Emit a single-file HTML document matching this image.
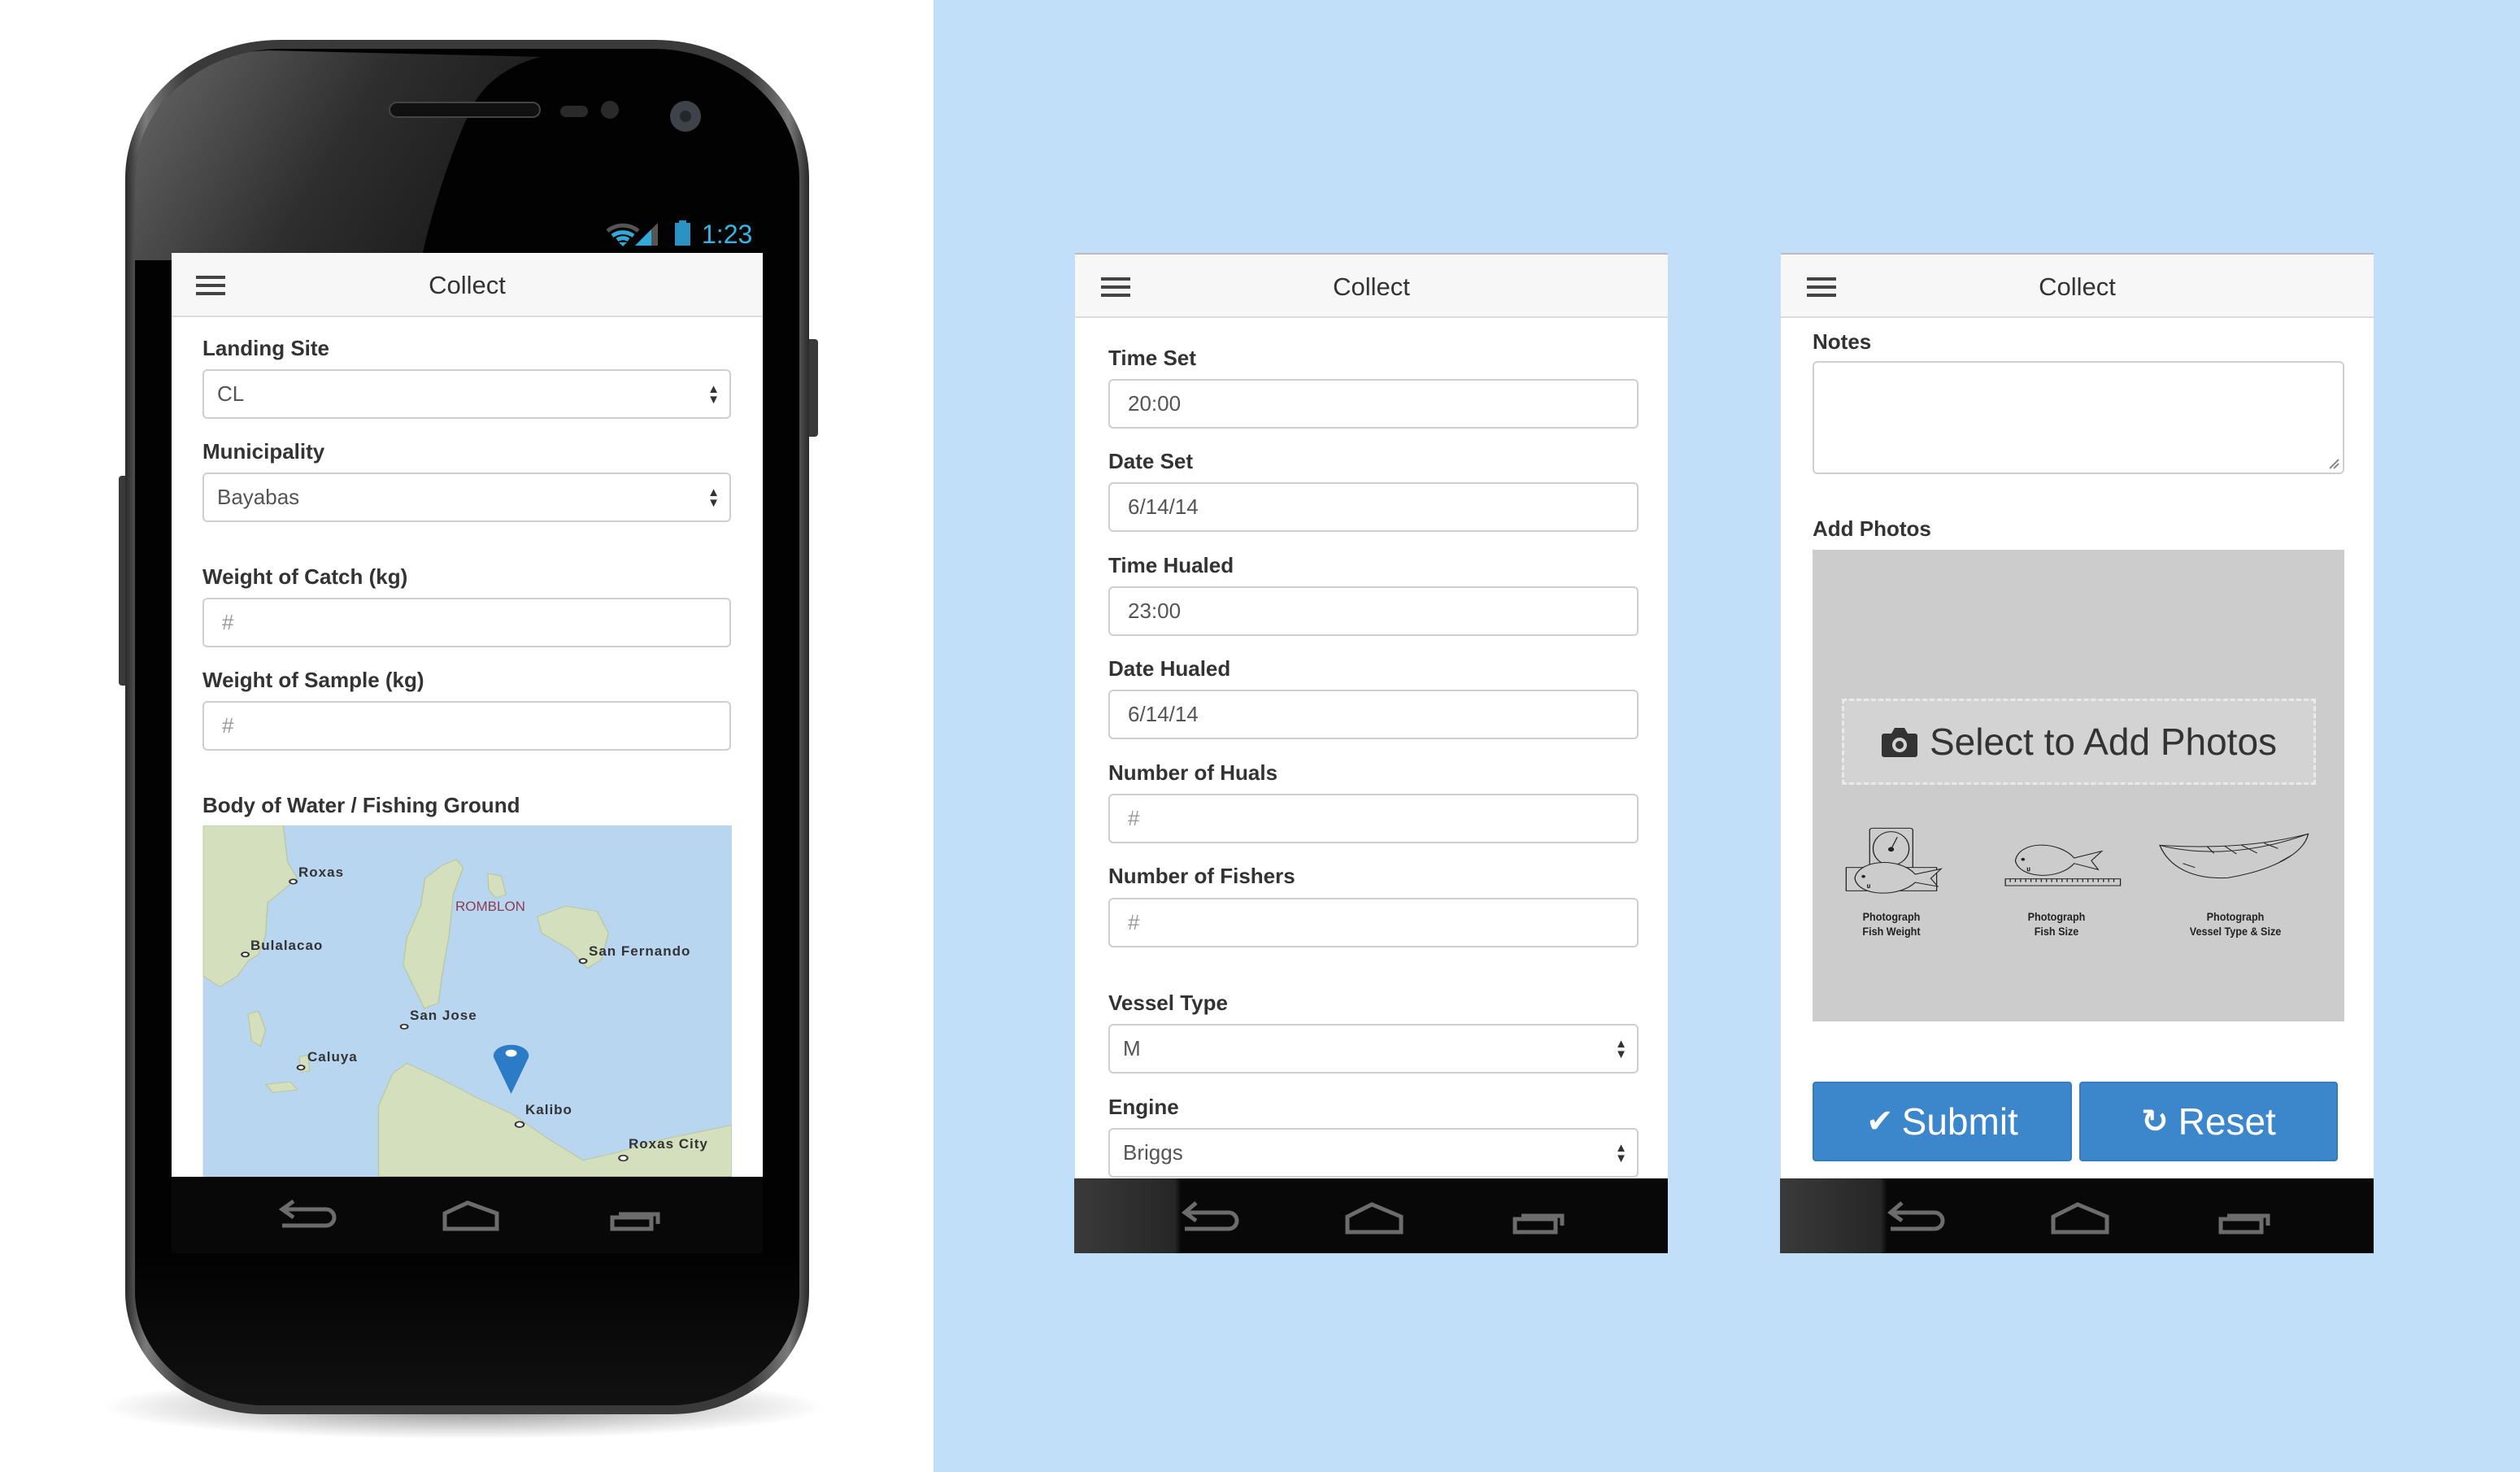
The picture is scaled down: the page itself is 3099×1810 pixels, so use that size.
<!DOCTYPE html>
<html><head><meta charset="utf-8"><style>
*{margin:0;padding:0;box-sizing:border-box}
body{width:3099px;height:1810px;position:relative;overflow:hidden;background:#c1dff8;font-family:"Liberation Sans",sans-serif;color:#333}
.abs{position:absolute}
.lbl{position:absolute;font-weight:bold;font-size:26px;color:#333;white-space:nowrap}
.inp{position:absolute;border:2px solid #cfcfcf;border-radius:6px;background:#fff;font-size:26px;color:#555;padding-left:22px;display:flex;align-items:center}
.ph{color:#999}
.sel{padding-left:16px}
.arr{position:absolute;right:12px;top:50%;transform:translateY(-50%);font-size:15px;line-height:13px;color:#333;text-align:center}
.hdr{position:absolute;background:#f7f7f7;border-bottom:2px solid #ddd;border-top:2px solid #bbb}
.hdr .t{position:absolute;left:0;right:0;text-align:center;font-size:31px;color:#333}
.ham{position:absolute;width:36px;height:4px;background:#444;box-shadow:0 10px 0 #444,0 20px 0 #444}
.nav{position:absolute;background:#070707}
.ml{position:absolute;font-weight:bold;font-size:17px;color:#333;white-space:nowrap;letter-spacing:1px}
.cap{position:absolute;font-weight:bold;font-size:14px;color:#222;text-align:center;line-height:18px;width:200px;transform:scaleX(0.9)}
</style></head><body>
<div class="abs" style="left:0;top:0;width:1148px;height:1810px;background:#fff"></div>

<div class="abs" style="left:120px;top:1690px;width:900px;height:80px;border-radius:50%;background:radial-gradient(ellipse at center,rgba(0,0,0,.45),rgba(0,0,0,0) 70%)"></div>
<div class="abs" style="left:146px;top:585px;width:14px;height:258px;background:#3a3a3a;border-radius:4px"></div>
<div class="abs" style="left:990px;top:417px;width:16px;height:120px;background:#3a3a3a;border-radius:4px"></div>
<div class="abs" style="left:154px;top:49px;width:841px;height:1690px;border-radius:190px 190px 170px 170px / 170px 170px 150px 150px;background:linear-gradient(90deg,#2a2a2a,#7a7a7a 3%,#3a3a3a 9%,#3a3a3a 91%,#7a7a7a 97%,#2a2a2a);"></div>
<div class="abs" style="left:166px;top:60px;width:817px;height:1668px;border-radius:180px 180px 160px 160px / 160px 160px 140px 140px;background:#020202;overflow:hidden">
  <svg class="abs" style="left:-166px;top:-60px" width="1000" height="400" viewBox="0 0 1000 400">
   <defs><linearGradient id="rg" x1="0" y1="0" x2="1" y2="0.3"><stop offset="0" stop-color="#6a6a6a"/><stop offset="0.6" stop-color="#2e2e2e"/><stop offset="1" stop-color="#1c1c1c"/></linearGradient></defs>
   <path d="M150 320 L150 200 Q160 70 330 62 L665 70 C625 80 600 100 584 125 C560 170 530 260 518 320 Z" fill="url(#rg)"/>
  </svg>
  <div class="abs" style="left:0;top:1480px;width:817px;height:200px;background:linear-gradient(180deg,#020202,#121212)"></div>
</div>
<div class="abs" style="left:478px;top:125px;width:187px;height:20px;border-radius:10px;background:#111;border:2px solid #444"></div>
<div class="abs" style="left:689px;top:130px;width:34px;height:14px;border-radius:7px;background:#2a2a2a"></div>
<div class="abs" style="left:739px;top:124px;width:22px;height:22px;border-radius:50%;background:#2a2a2a"></div>
<div class="abs" style="left:824px;top:124px;width:38px;height:38px;border-radius:50%;background:#3e4249"><div class="abs" style="left:12px;top:12px;width:14px;height:14px;border-radius:50%;background:#23262b"></div></div>
<svg class="abs" style="left:745px;top:270px" width="110" height="34" viewBox="0 0 110 34">
<path d="M2 14 A30 30 0 0 1 40 14" stroke="#555" stroke-width="5" fill="none"/>
<path d="M8 20 A22 22 0 0 1 34 20 M14 25 A12 12 0 0 1 28 25" stroke="#33a9d9" stroke-width="5" fill="none"/>
<path d="M16 28 L21 33 L26 28 Z" fill="#33a9d9"/>
<path d="M36 32 L64 4 L64 32 Z" fill="#555"/>
<path d="M36 32 L56 12 L56 32 Z" fill="#33a9d9"/>
<rect x="85" y="4" width="19" height="28" fill="#2b93c4"/><rect x="90" y="1" width="9" height="4" fill="#2b93c4"/>
</svg>
<div class="abs" style="left:863px;top:270px;font-size:32px;color:#33b5e5">1:23</div>

<div class="abs" style="left:211px;top:311px;width:727px;height:1137px;background:#fff;overflow:hidden">
  <div class="hdr" style="left:0;top:0;width:727px;height:79px;border-top:none"><div class="ham" style="left:30px;top:28px"></div><div class="t" style="top:22px">Collect</div></div>
</div>
<div class="lbl" style="left:249px;top:413px">Landing Site</div>
<div class="inp sel" style="left:249px;top:454px;width:650px;height:61px">CL<div class="arr">▲<br>▼</div></div>
<div class="lbl" style="left:249px;top:540px">Municipality</div>
<div class="inp sel" style="left:249px;top:581px;width:650px;height:61px">Bayabas<div class="arr">▲<br>▼</div></div>
<div class="lbl" style="left:249px;top:694px">Weight of Catch (kg)</div>
<div class="inp ph" style="left:249px;top:735px;width:650px;height:61px">#</div>
<div class="lbl" style="left:249px;top:821px">Weight of Sample (kg)</div>
<div class="inp ph" style="left:249px;top:862px;width:650px;height:61px">#</div>
<div class="lbl" style="left:249px;top:975px">Body of Water / Fishing Ground</div>
<svg class="abs" style="left:240px;top:1000px" width="680" height="460" viewBox="0 0 1568 1380" preserveAspectRatio="none">
<defs><clipPath id="mc"><rect x="22" y="45" width="1500" height="1296"/></clipPath></defs>
<g clip-path="url(#mc)">
<rect x="0" y="0" width="1568" height="1380" fill="#b9d6f1"/>
<g fill="#d4dfbd" stroke="#b9c79d" stroke-width="3">
<path d="M22 45 L250 45 L262 180 L290 240 L205 330 L200 450 L180 520 L150 545 L120 600 L70 640 L22 600Z"/>
<path d="M740 170 L760 200 L732 300 L720 450 L700 600 L690 700 L650 720 L620 640 L590 560 L600 460 L640 340 L652 240 L700 192Z"/>
<path d="M830 222 L868 232 L882 300 L852 312 L832 282Z"/>
<path d="M970 382 L1050 342 L1140 362 L1172 442 L1152 540 L1112 572 L1062 502 L982 442Z"/>
<path d="M520 1080 L560 960 L600 922 L700 982 L800 1050 L900 1110 L1000 1200 L1100 1280 L1200 1250 L1300 1210 L1522 1150 L1522 1340 L520 1340Z"/>
<path d="M150 740 L180 730 L200 800 L185 860 L160 840Z"/>
<path d="M200 1000 L270 990 L290 1020 L220 1030Z"/>
<path d="M295 900 L320 890 L325 950 L300 955Z"/>
</g>
<g fill="#fff" stroke="#333" stroke-width="5"><ellipse cx="278" cy="252" rx="10" ry="8"/><ellipse cx="142" cy="521" rx="10" ry="8"/><ellipse cx="1100" cy="545" rx="10" ry="8"/><ellipse cx="593" cy="787" rx="10" ry="8"/><ellipse cx="300" cy="938" rx="10" ry="8"/><ellipse cx="920" cy="1148" rx="12" ry="10"/><ellipse cx="1214" cy="1272" rx="12" ry="10"/></g>
<path d="M896 1035 L850 910 A50 40 0 1 1 942 910 Z" fill="#2c7bc6"/>
<ellipse cx="896" cy="885" rx="16" ry="13" fill="#fff"/>
</g></svg>
<div class="ml" style="left:367px;top:1063px">Roxas</div>
<div class="ml" style="left:308px;top:1153px">Bulalacao</div>
<div class="ml" style="left:724px;top:1160px">San Fernando</div>
<div class="ml" style="left:504px;top:1239px">San Jose</div>
<div class="ml" style="left:378px;top:1290px">Caluya</div>
<div class="ml" style="left:646px;top:1355px">Kalibo</div>
<div class="ml" style="left:773px;top:1397px">Roxas City</div>
<div class="abs" style="left:560px;top:1105px;font-size:17px;color:#8a3c50">ROMBLON</div>

<div class="nav" style="left:211px;top:1447px;width:727px;height:94px;background:#080808"></div>
<svg class="abs" style="left:211px;top:1447px" width="727" height="94" viewBox="0 0 727 94">
<g stroke="#6c6c6c" stroke-width="5" fill="none">
<path d="M136 60 L190 60 A10 10 0 0 0 190 40 L138 40 M150 30 L136 40 L150 50"/>
<path d="M336 64 L336 45 L364 32 L400 45 L400 64 Z"/>
<path d="M542 64 L542 50 L590 50 L590 64 Z M550 46 L598 46 L598 58"/>
</g></svg>

<div class="abs" style="left:1322px;top:311px;width:729px;height:1140px;background:#fff"></div>
<div class="hdr" style="left:1322px;top:311px;width:729px;height:80px"><div class="ham" style="left:32px;top:28px"></div><div class="t" style="top:22px">Collect</div></div>
<div class="lbl" style="left:1363px;top:425px">Time Set</div>
<div class="inp" style="left:1363px;top:466px;width:652px;height:61px">20:00</div>
<div class="lbl" style="left:1363px;top:552px">Date Set</div>
<div class="inp" style="left:1363px;top:593px;width:652px;height:61px">6/14/14</div>
<div class="lbl" style="left:1363px;top:680px">Time Hualed</div>
<div class="inp" style="left:1363px;top:721px;width:652px;height:61px">23:00</div>
<div class="lbl" style="left:1363px;top:807px">Date Hualed</div>
<div class="inp" style="left:1363px;top:848px;width:652px;height:61px">6/14/14</div>
<div class="lbl" style="left:1363px;top:935px">Number of Huals</div>
<div class="inp ph" style="left:1363px;top:976px;width:652px;height:61px">#</div>
<div class="lbl" style="left:1363px;top:1062px">Number of Fishers</div>
<div class="inp ph" style="left:1363px;top:1104px;width:652px;height:61px">#</div>
<div class="lbl" style="left:1363px;top:1218px">Vessel Type</div>
<div class="inp sel" style="left:1363px;top:1259px;width:652px;height:61px">M<div class="arr">▲<br>▼</div></div>
<div class="lbl" style="left:1363px;top:1346px">Engine</div>
<div class="inp sel" style="left:1363px;top:1387px;width:652px;height:61px">Briggs<div class="arr">▲<br>▼</div></div>
<div class="nav" style="left:1321px;top:1449px;width:730px;height:92px;background:linear-gradient(90deg,#3a3a3a,#262626 17%,#080808 18%)"></div>
<svg class="abs" style="left:1321px;top:1449px" width="730" height="92" viewBox="0 0 730 92">
<g stroke="#6c6c6c" stroke-width="5" fill="none">
<path d="M136 62 L190 62 A10 10 0 0 0 190 42 L138 42 M150 30 L136 42 L150 52"/>
<path d="M336 66 L336 47 L366 32 L402 47 L402 66 Z"/>
<path d="M542 66 L542 50 L592 50 L592 66 Z M550 46 L600 46 L600 58"/>
</g></svg>

<div class="abs" style="left:2190px;top:311px;width:729px;height:1140px;background:#fff"></div>
<div class="hdr" style="left:2190px;top:311px;width:729px;height:80px"><div class="ham" style="left:32px;top:28px"></div><div class="t" style="top:22px">Collect</div></div>
<div class="lbl" style="left:2229px;top:405px">Notes</div>
<div class="inp" style="left:2229px;top:444px;width:654px;height:139px"><svg class="abs" style="right:4px;bottom:4px" width="14" height="14"><path d="M2 13 L13 2 M7 13 L13 7" stroke="#888" stroke-width="2"/></svg></div>
<div class="lbl" style="left:2229px;top:635px">Add Photos</div>
<div class="abs" style="left:2229px;top:676px;width:654px;height:580px;background:#cccccc"></div>
<div class="abs" style="left:2265px;top:859px;width:583px;height:106px;border:3px dashed #e9e9e9;background:#d3d3d3;display:flex;align-items:center;justify-content:center;font-size:46px;color:#333">
<svg width="46" height="40" viewBox="0 0 46 40" style="margin-right:14px"><path d="M4 10 H13 L17 3 H29 L33 10 H42 A3 3 0 0 1 45 13 V36 A3 3 0 0 1 42 39 H4 A3 3 0 0 1 1 36 V13 A3 3 0 0 1 4 10 Z" fill="#333"/><circle cx="23" cy="24" r="9" fill="#d3d3d3"/><circle cx="23" cy="24" r="5" fill="#333"/></svg>Select to Add Photos</div>
<svg class="abs" style="left:2230px;top:990px" width="660" height="190" viewBox="0 0 1554 570" preserveAspectRatio="none">
<g stroke="#222" stroke-width="3" fill="none" vector-effect="non-scaling-stroke">
<rect x="163" y="85" width="125" height="150" rx="8" fill="#ccc"/>
<ellipse cx="225" cy="160" rx="52" ry="62"/><path d="M225 163 L243 118"/><circle cx="225" cy="163" r="7" fill="#222"/>
<rect x="95" y="230" width="262" height="86" fill="#ccc"/>
<path d="M120 270 C130 200 250 190 295 255 L370 235 L340 270 L360 300 L295 285 C250 340 130 340 120 270 Z" fill="#ccc"/>
<circle cx="145" cy="263" r="4" fill="#222"/><path d="M157 292 v10 a3 3 0 0 0 6 0 v-10"/>
<path d="M585 205 C595 130 710 130 755 195 L835 170 L805 205 L825 238 L755 215 C710 280 595 270 585 205 Z"/>
<circle cx="607" cy="200" r="4" fill="#222"/><path d="M620 230 v10 a3 3 0 0 0 6 0 v-10"/>
<rect x="556" y="272" width="333" height="25"/><path d="M570 272 v12 M585 272 v12 M600 272 v12 M615 272 v12 M630 272 v12 M645 272 v12 M660 272 v12 M675 272 v12 M690 272 v12 M705 272 v12 M720 272 v12 M735 272 v12 M750 272 v12 M765 272 v12 M780 272 v12 M795 272 v12 M810 272 v12 M825 272 v12 M840 272 v12 M855 272 v12 M870 272 v12"/>
<path d="M1003 148 C1150 160 1300 150 1433 106 C1420 180 1330 240 1200 268 C1100 275 1030 230 1003 148 Z"/>
<path d="M1003 148 C1100 180 1250 190 1433 106 M1140 152 L1160 178 M1190 150 L1225 180 M1240 148 L1285 177 M1305 140 L1345 160 M1070 215 L1105 230 M1350 210 L1385 185"/>
</g></svg>
<div class="cap" style="left:2226px;top:1118px">Photograph<br>Fish Weight</div>
<div class="cap" style="left:2429px;top:1118px">Photograph<br>Fish Size</div>
<div class="cap" style="left:2649px;top:1118px">Photograph<br>Vessel Type &amp; Size</div>
<div class="abs" style="left:2229px;top:1330px;width:319px;height:98px;background:#3c87cc;border:2px solid #357ebd;border-radius:4px;color:#fff;font-size:46px;display:flex;align-items:center;justify-content:center"><span style="font-family:'DejaVu Sans';font-size:40px;margin-right:10px">✔</span>Submit</div>
<div class="abs" style="left:2557px;top:1330px;width:318px;height:98px;background:#3c87cc;border:2px solid #357ebd;border-radius:4px;color:#fff;font-size:46px;display:flex;align-items:center;justify-content:center"><span style="font-family:'DejaVu Sans';font-size:40px;margin-right:12px;font-weight:bold">↻</span>Reset</div>
<div class="nav" style="left:2189px;top:1449px;width:730px;height:92px;background:linear-gradient(90deg,#3a3a3a,#262626 17%,#080808 18%)"></div>
<svg class="abs" style="left:2189px;top:1449px" width="730" height="92" viewBox="0 0 730 92">
<g stroke="#6c6c6c" stroke-width="5" fill="none">
<path d="M136 62 L190 62 A10 10 0 0 0 190 42 L138 42 M150 30 L136 42 L150 52"/>
<path d="M336 66 L336 47 L366 32 L402 47 L402 66 Z"/>
<path d="M542 66 L542 50 L592 50 L592 66 Z M550 46 L600 46 L600 58"/>
</g></svg>
</body></html>
